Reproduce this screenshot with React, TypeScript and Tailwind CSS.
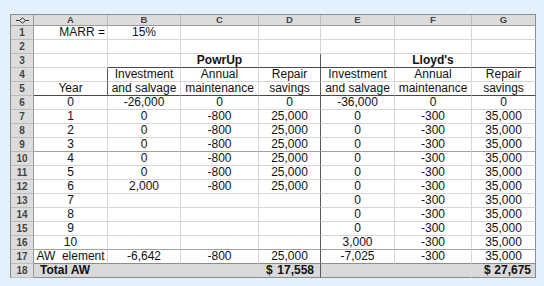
import React from 'react';

type Align = 'l' | 'c' | 'r';
interface Cell {
  text: string;
  align?: Align;
  bold?: boolean;
}

const letters = ['A', 'B', 'C', 'D', 'E', 'F', 'G'];

const c = (text: string, align: Align = 'c', bold = false): Cell => ({ text, align, bold });

const plain = (vals: string[]): Cell[] => vals.map(v => c(v));

const rows: Cell[][] = [
  [c('MARR =', 'r'), c('15%'), c(''), c(''), c(''), c(''), c('')],
  plain(['', '', '', '', '', '', '']),
  [c(''), c(''), c('PowrUp', 'c', true), c(''), c(''), c("Lloyd's", 'c', true), c('')],
  plain(['', 'Investment', 'Annual', 'Repair', 'Investment', 'Annual', 'Repair']),
  plain(['Year', 'and salvage', 'maintenance', 'savings', 'and salvage', 'maintenance', 'savings']),
  plain(['0', '-26,000', '0', '0', '-36,000', '0', '0']),
  plain(['1', '0', '-800', '25,000', '0', '-300', '35,000']),
  plain(['2', '0', '-800', '25,000', '0', '-300', '35,000']),
  plain(['3', '0', '-800', '25,000', '0', '-300', '35,000']),
  plain(['4', '0', '-800', '25,000', '0', '-300', '35,000']),
  plain(['5', '0', '-800', '25,000', '0', '-300', '35,000']),
  plain(['6', '2,000', '-800', '25,000', '0', '-300', '35,000']),
  plain(['7', '', '', '', '0', '-300', '35,000']),
  plain(['8', '', '', '', '0', '-300', '35,000']),
  plain(['9', '', '', '', '0', '-300', '35,000']),
  plain(['10', '', '', '', '3,000', '-300', '35,000']),
  plain(['AW\u00a0 element', '-6,642', '-800', '25,000', '-7,025', '-300', '35,000']),
];

// right border colour for a body cell
const rightClass = (row: number, col: number) => {
  if (col === 6) return 'border-r-[#8c8c8c]';
  if (col === 3 && row >= 3) return 'border-r-[#5a5a5a]';
  if (col === 0 && (row === 4 || row === 5)) return 'border-r-[#5a5a5a]';
  return 'border-r-[#d6d6d6]';
};

const bottomClass = (row: number, col: number) => {
  if (row === 3 && col >= 1) return 'border-b-[#4a4a4a]';
  if (row === 5) return 'border-b-[#4a4a4a]';
  if (row === 9 || row === 16) return 'border-b-[#a0a0a0]';
  if (row === 17) return 'border-b-[#8c8c8c]';
  return 'border-b-[#d6d6d6]';
};

const alignClass = (a?: Align) => (a === 'r' ? 'justify-end pr-[2px]' : a === 'l' ? 'justify-start pl-[4px]' : 'justify-center');

const RowNum: React.FC<{ n: number }> = ({ n }) => (
  <div className="flex items-center justify-center bg-[#dcdcdc] border-r border-b border-r-[#9a9a9a] border-b-[#bdbdbd] text-[10px] font-semibold text-[#444]">
    {n}
  </div>
);

export default function App() {
  return (
    <div className="w-[544px] h-[286px] bg-[#e2f1fb] pt-[14px] pl-[10px]" style={{ fontFamily: '"Liberation Sans", Arial, sans-serif' }}>
      <div className="grid w-fit grid-cols-[23px_74px_73px_78px_62px_74px_77px_64px] grid-rows-[11px_repeat(18,14px)] border-l border-t border-[#8c8c8c] bg-white text-[12px] leading-[13px] text-[#111]">
        {/* column header */}
        <div className="flex items-center justify-center bg-[#dcdcdc] border-r border-b border-r-[#9a9a9a] border-b-[#9a9a9a]">
          <svg width="13" height="7" viewBox="0 0 13 7">
            <path d="M0 3.5H3M10 3.5H13M6.5 0.8L9.6 3.5L6.5 6.2L3.4 3.5Z" fill="none" stroke="#333" strokeWidth="1" />
          </svg>
        </div>
        {letters.map((l, i) => (
          <div
            key={l}
            className={`flex items-center justify-center bg-[#dcdcdc] border-r border-b border-b-[#9a9a9a] text-[9.5px] leading-[10px] font-semibold text-[#444] ${i === 6 ? 'border-r-[#8c8c8c]' : 'border-r-[#bdbdbd]'}`}
          >
            {l}
          </div>
        ))}

        {rows.map((cells, ri) => {
          const row = ri + 1;
          return (
            <React.Fragment key={row}>
              <RowNum n={row} />
              {cells.map((cell, ci) => (
                <div
                  key={ci}
                  className={`flex items-center whitespace-pre border-r border-b ${rightClass(row, ci)} ${bottomClass(row, ci)} ${alignClass(cell.align)} ${cell.bold ? 'font-bold' : ''}`}
                >
                  {cell.text}
                </div>
              ))}
            </React.Fragment>
          );
        })}

        {/* row 18: totals */}
        <RowNum n={18} />
        <div className="col-span-3 flex items-center bg-[#d9d9d9] border-b border-r border-b-[#8c8c8c] border-r-[#d9d9d9] pl-[6px] font-bold">
          Total AW
        </div>
        <div className="flex items-center justify-between bg-[#d9d9d9] border-b border-r border-b-[#8c8c8c] border-r-[#5a5a5a] pl-[7px] pr-[6px] font-bold">
          <span>$</span>
          <span>17,558</span>
        </div>
        <div className="col-span-2 bg-[#d9d9d9] border-b border-r border-b-[#8c8c8c] border-r-[#d9d9d9]" />
        <div className="flex items-center justify-between bg-[#d9d9d9] border-b border-r border-b-[#8c8c8c] border-r-[#8c8c8c] pl-[12px] pr-[4px] font-bold">
          <span>$</span>
          <span>27,675</span>
        </div>
      </div>
    </div>
  );
}
